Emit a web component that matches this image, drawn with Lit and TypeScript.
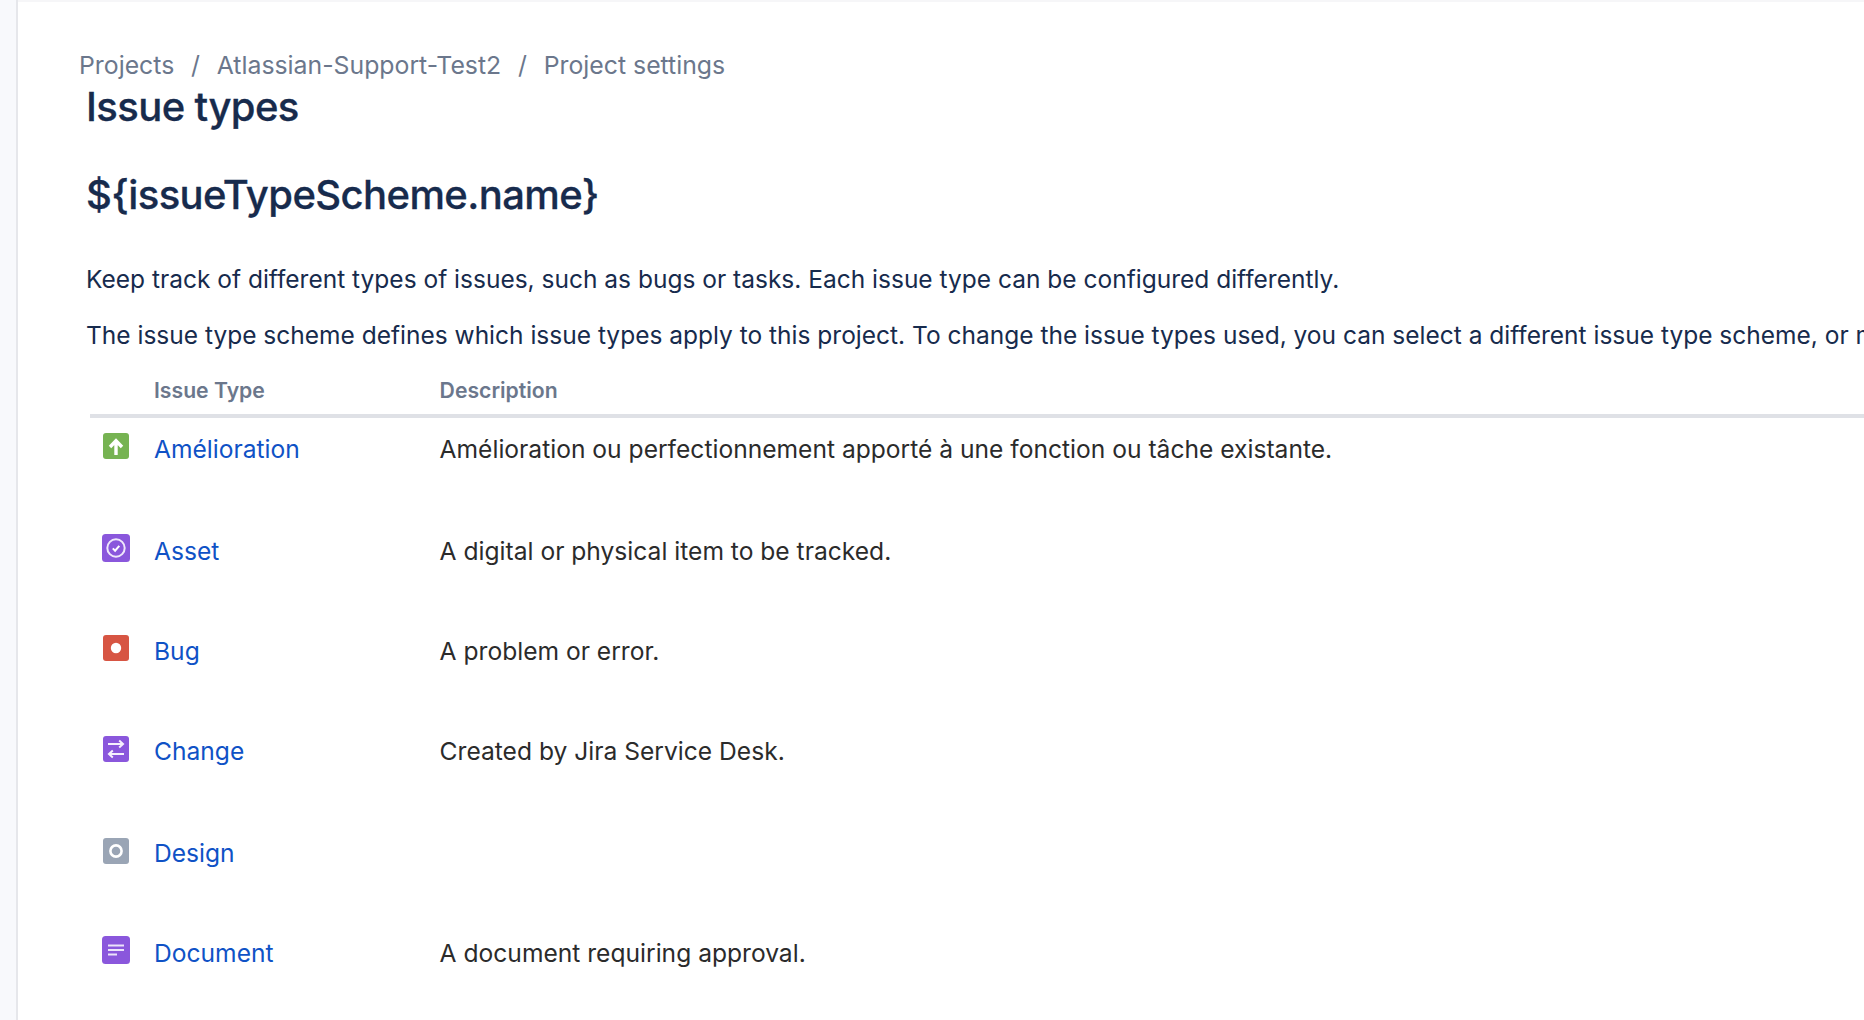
import { LitElement, html, css, svg } from "lit";
import { customElement } from "lit/decorators.js";

const icons: Record<string, unknown> = {
  up: svg`<rect width="26" height="26" rx="3" fill="#76b352"/><path d="M13 22V9M7 14 13 7.8l6 6.2" fill="none" stroke="#fff" stroke-width="3.4"/>`,
  asset: svg`<rect width="28" height="28" rx="3.5" fill="#8a57dc"/><circle cx="14" cy="14" r="8.7" fill="none" stroke="#efe7fb" stroke-width="2"/><path d="M10.8 14.4l2.3 2.3 4.2-4.8" fill="none" stroke="#fff" stroke-width="2"/>`,
  bug: svg`<rect width="26" height="26" rx="3" fill="#d75543"/><circle cx="13" cy="13" r="5.2" fill="#fff"/>`,
  change: svg`<rect width="26" height="26" rx="3" fill="#8a57dc"/><path d="M5 8h14.5M16.2 4.6 20 8l-3.8 3.4M21 18H6.5M9.8 14.6 6 18l3.8 3.4" fill="none" stroke="#f6f1fd" stroke-width="2"/>`,
  design: svg`<rect width="26" height="26" rx="3" fill="#9aa5b5"/><circle cx="13" cy="13" r="5.6" fill="none" stroke="#fff" stroke-width="2.6"/>`,
  doc: svg`<rect width="28" height="28" rx="3.5" fill="#8a57dc"/><path d="M6 9.5h16M6 14h16M6 18.5h9" fill="none" stroke="#ece3fa" stroke-width="2"/>`,
};

const rows = [
  { icon: "up", name: "Amélioration", desc: "Amélioration ou perfectionnement apporté à une fonction ou tâche existante.", h: 102, size: 26, dy: 0, wide: false },
  { icon: "asset", name: "Asset", desc: "A digital or physical item to be tracked.", h: 100, size: 28, dy: -1, wide: true },
  { icon: "bug", name: "Bug", desc: "A problem or error.", h: 100, size: 26, dy: 0, wide: false },
  { icon: "change", name: "Change", desc: "Created by Jira Service Desk.", h: 102, size: 26, dy: 1, wide: false },
  { icon: "design", name: "Design", desc: "", h: 100, size: 26, dy: 1, wide: false },
  { icon: "doc", name: "Document", desc: "A document requiring approval.", h: 100, size: 28, dy: -1, wide: true },
];

@customElement("app-root")
export class AppRoot extends LitElement {
  static styles = css`
    :host {
      display: flex;
      width: 100%;
      height: 1020px;
      overflow: hidden;
      background: #fff;
      font-family: Inter, "Liberation Sans", sans-serif;
      color: #172b4d;
    }
    .rail {
      flex: 0 0 18px;
      background: #f8f9fc;
      border-right: 2px solid #e6e7eb;
      box-sizing: border-box;
    }
    .page {
      flex: 1;
      min-width: 0;
      display: flex;
      flex-direction: column;
      overflow: hidden;
      border-top: 2px solid #f6f6f8;
      padding: 47px 0 0 61px;
      box-sizing: border-box;
    }
    .crumbs {
      display: flex;
      gap: 16.8px;
      font-size: 24.8px;
      line-height: 32px;
      color: #6b778c;
      white-space: nowrap;
    }
    .content { padding-left: 7px; }
    h1, h2 {
      margin: 0;
      font-weight: 500;
      white-space: nowrap;
      letter-spacing: -0.6px;
      -webkit-text-stroke: 0.3px #172b4d;
    }
    h1 { font-size: 40px; line-height: 48px; margin-top: 2px; }
    h2 { font-size: 40px; line-height: 48px; margin-top: 40px; }
    p {
      margin: 0;
      font-size: 24.5px;
      line-height: 32px;
      white-space: nowrap;
    }
    .p1 { margin-top: 44px; }
    .p2 { margin-top: 24px; }
    .table { margin-left: 4px; margin-top: 14px; width: 1800px; }
    .head, .row {
      display: grid;
      grid-template-columns: 64px 285.6px 1fr;
    }
    .head {
      height: 49px;
      align-items: center;
      font-size: 21.2px;
      font-weight: 600;
      color: #6b778c;
      border-bottom: 4px solid #dfe1e6;
    }
    .row {
      font-size: 24.6px;
      line-height: 32px;
      color: #2b2b2b;
      padding-top: 15px;
      box-sizing: border-box;
    }
    .row a { color: #0f52c6; text-decoration: none; }
    .ico { padding-left: 13px; }
    .ico.wide { padding-left: 12px; }
    svg { display: block; }
  `;

  render() {
    return html`
      <div class="rail"></div>
      <main class="page">
        <nav class="crumbs">
          <span>Projects</span><span>/</span><span>Atlassian-Support-Test2</span><span>/</span><span>Project settings</span>
        </nav>
        <div class="content">
          <h1>Issue types</h1>
          <h2>\${issueTypeScheme.name}</h2>
          <p class="p1">Keep track of different types of issues, such as bugs or tasks. Each issue type can be configured differently.</p>
          <p class="p2">The issue type scheme defines which issue types apply to this project. To change the issue types used, you can select a different issue type scheme, or modify the current scheme.</p>
          <div class="table">
            <div class="head"><span></span><span>Issue Type</span><span>Description</span></div>
            ${rows.map(
              (r) => html`
                <div class="row" style="height:${r.h}px">
                  <div class="ico ${r.wide ? "wide" : ""}" style="margin-top:${r.dy}px">
                    <svg width=${r.size} height=${r.size} viewBox="0 0 ${r.size} ${r.size}">${icons[r.icon]}</svg>
                  </div>
                  <a href="#">${r.name}</a>
                  <span>${r.desc}</span>
                </div>
              `
            )}
          </div>
        </div>
      </main>
    `;
  }
}
